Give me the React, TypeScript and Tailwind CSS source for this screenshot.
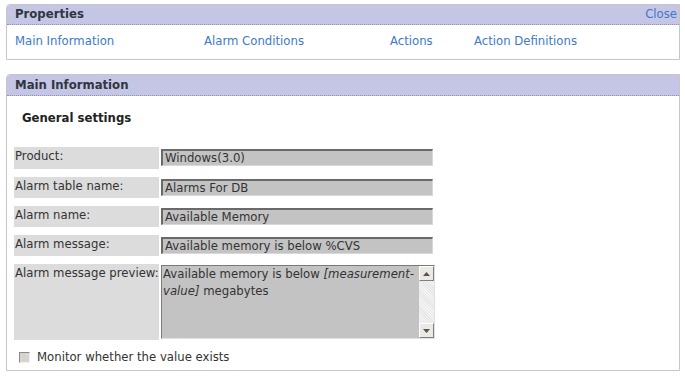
import React from 'react'

const font = { fontFamily: '"DejaVu Sans", Verdana, sans-serif' }

const rows = [
  { label: 'Product:', value: 'Windows(3.0)' },
  { label: 'Alarm table name:', value: 'Alarms For DB' },
  { label: 'Alarm name:', value: 'Available Memory' },
  { label: 'Alarm message:', value: 'Available memory is below %CVS' },
]

function ScrollArrow({ up }: { up?: boolean }) {
  return (
    <div className="w-[15px] h-[15px] bg-[#ece9e2] border border-t-white border-l-white border-r-[#808080] border-b-[#808080] flex items-center justify-center">
      <svg width="7" height="4" viewBox="0 0 7 4">
        <path d={up ? 'M0 4 L3.5 0 L7 4 Z' : 'M0 0 L3.5 4 L7 0 Z'} fill="#555" />
      </svg>
    </div>
  )
}

export default function App() {
  return (
    <div className="w-[685px] h-[376px] bg-white pt-[4px] pl-[6px] text-[11.7px] text-[#333]" style={font}>
      {/* properties panel */}
      <div className="w-[674px] border border-[#c6c6c6] rounded-tl-[4px]">
        <div className="h-[20px] bg-[#c5c5e6] border-b border-dotted border-[#8f8fae] flex items-center justify-between pl-[8px] pr-[2px] rounded-tl-[3px]">
          <span className="font-bold text-[#2f3640]">Properties</span>
          <span className="text-[#3d7ac7]">Close</span>
        </div>
        <div className="h-[34px] grid grid-cols-[189px_186px_84px_1fr] items-center pl-[8px] text-[#3d7ac7]">
          <span>Main Information</span>
          <span>Alarm Conditions</span>
          <span>Actions</span>
          <span>Action Definitions</span>
        </div>
      </div>

      {/* main information panel */}
      <div className="mt-[14px] w-[674px] h-[297px] border border-[#c6c6c6] rounded-tl-[4px]">
        <div className="h-[21px] bg-[#c5c5e6] border-b border-dotted border-[#8f8fae] flex items-center pl-[8px] pt-[1px] rounded-tl-[3px]">
          <span className="font-bold text-[#2f3640]">Main Information</span>
        </div>
        <div className="pl-[7px]">
          <div className="pl-[8px] pt-[14px] h-[51px] font-bold text-[#222]">General settings</div>
          <div className="grid grid-cols-[145px_274px] gap-x-[2px] gap-y-[8px]">
            {rows.map((r, i) => (
              <React.Fragment key={r.label}>
                <div className={`bg-[#dcdcdc] pl-[1px] pt-[1px] ${i === 0 ? 'h-[22px]' : 'h-[21px]'}`}>{r.label}</div>
                <div className="pt-[2px]">
                  <div className="w-[272px] h-[17px] bg-[#c3c3c3] border-t-2 border-l-2 border-t-[#6a6a6a] border-l-[#6a6a6a] border-b border-r border-b-[#d8d8d8] border-r-[#d8d8d8] pl-[2px] leading-[14px] text-[#333]">
                    {r.value}
                  </div>
                </div>
              </React.Fragment>
            ))}
            <div className="bg-[#dcdcdc] h-[76px] pl-[1px] pt-[1px] whitespace-nowrap">Alarm message preview:</div>
            <div className="pt-[1px]">
              <div className="w-[274px] h-[74px] bg-[#c3c3c3] border-t border-l border-[#7a7a7a] border-b border-r border-b-[#e0e0e0] border-r-[#e0e0e0] flex">
                <div className="flex-1 pl-[1px] leading-[17px] text-[#333]">
                  <div className="whitespace-nowrap">
                    Available memory is below <i>[measurement-</i>
                  </div>
                  <div>
                    <i>value]</i> megabytes
                  </div>
                </div>
                <div className="w-[15px] flex flex-col justify-between bg-[repeating-linear-gradient(45deg,#f4f4f4_0px,#f4f4f4_1px,#e6e6e6_1px,#e6e6e6_2px)]">
                  <ScrollArrow up />
                  <ScrollArrow />
                </div>
              </div>
            </div>
          </div>
          <div className="mt-[9px] flex items-center pl-[5px]">
            <div className="w-[11px] h-[11px] bg-[#d8d5cf] border border-t-[#8a8a8a] border-l-[#8a8a8a] border-b-[#f0f0f0] border-r-[#f0f0f0]" />
            <span className="ml-[7px]">Monitor whether the value exists</span>
          </div>
        </div>
      </div>
    </div>
  )
}
